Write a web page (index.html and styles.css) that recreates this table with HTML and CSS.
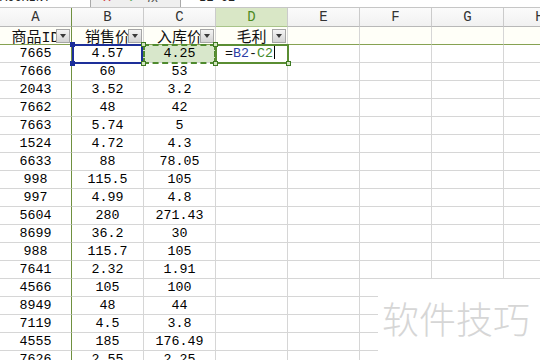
FILE: index.html
```html
<!DOCTYPE html>
<html>
<head>
<meta charset="utf-8">
<link rel="stylesheet" href="styles.css">
</head>
<body>
<div class="app">
  <div class="fbar">
    <div class="namebox"><span class="fbar-text">ACCRINT</span></div>
    <div class="fbtns">
      <span class="fb-icon fb-x">✕</span>
      <span class="fb-icon fb-ok">✓</span>
      <span class="fb-icon fb-fx">fx</span>
    </div>
    <div class="finput"><span class="fbar-text">=B2-C2</span></div>
  </div>
  <div class="sheet">
    <div class="ch ca">A</div><div class="ch">B</div><div class="ch">C</div><div class="ch sel">D</div><div class="ch">E</div><div class="ch">F</div><div class="ch">G</div><div class="ch">H</div>

    <div class="c fh ca"><span class="cjk">商品</span>ID<span class="dd"></span></div>
    <div class="c fh"><span class="cjk">销售价</span><span class="dd"></span></div>
    <div class="c fh"><span class="cjk">入库价</span><span class="dd"></span></div>
    <div class="c fh"><span class="cjk">毛利</span><span class="dd"></span></div>
    <div class="c fh"></div><div class="c fh"></div><div class="c fh"></div><div class="c fh"></div>

    <div class="c ca">7665</div>
    <div class="c b2">4.57<span class="box box-blue"></span><span class="h hb b2-tl"></span><span class="h hb b2-bl"></span></div>
    <div class="c c2">4.25<span class="box box-dash"></span><span class="h hg c2-tl"></span><span class="h hg c2-bl"></span><span class="h hg c2-tr"></span><span class="h hg c2-br"></span></div>
    <div class="c d2"><span class="op">=</span><span class="rb">B2</span><span class="op">-</span><span class="rc">C2</span><span class="caret"></span><span class="box box-green"></span><span class="h hg d2-br"></span></div>
    <div class="c"></div><div class="c"></div><div class="c"></div><div class="c"></div>

    <div class="c ca">7666</div><div class="c">60</div><div class="c">53</div><div class="c"></div><div class="c"></div><div class="c"></div><div class="c"></div><div class="c"></div>
    <div class="c ca">2043</div><div class="c">3.52</div><div class="c">3.2</div><div class="c"></div><div class="c"></div><div class="c"></div><div class="c"></div><div class="c"></div>
    <div class="c ca">7662</div><div class="c">48</div><div class="c">42</div><div class="c"></div><div class="c"></div><div class="c"></div><div class="c"></div><div class="c"></div>
    <div class="c ca">7663</div><div class="c">5.74</div><div class="c">5</div><div class="c"></div><div class="c"></div><div class="c"></div><div class="c"></div><div class="c"></div>
    <div class="c ca">1524</div><div class="c">4.72</div><div class="c">4.3</div><div class="c"></div><div class="c"></div><div class="c"></div><div class="c"></div><div class="c"></div>
    <div class="c ca">6633</div><div class="c">88</div><div class="c">78.05</div><div class="c"></div><div class="c"></div><div class="c"></div><div class="c"></div><div class="c"></div>
    <div class="c ca">998</div><div class="c">115.5</div><div class="c">105</div><div class="c"></div><div class="c"></div><div class="c"></div><div class="c"></div><div class="c"></div>
    <div class="c ca">997</div><div class="c">4.99</div><div class="c">4.8</div><div class="c"></div><div class="c"></div><div class="c"></div><div class="c"></div><div class="c"></div>
    <div class="c ca">5604</div><div class="c">280</div><div class="c">271.43</div><div class="c"></div><div class="c"></div><div class="c"></div><div class="c"></div><div class="c"></div>
    <div class="c ca">8699</div><div class="c">36.2</div><div class="c">30</div><div class="c"></div><div class="c"></div><div class="c"></div><div class="c"></div><div class="c"></div>
    <div class="c ca">988</div><div class="c">115.7</div><div class="c">105</div><div class="c"></div><div class="c"></div><div class="c"></div><div class="c"></div><div class="c"></div>
    <div class="c ca">7641</div><div class="c">2.32</div><div class="c">1.91</div><div class="c"></div><div class="c"></div><div class="c"></div><div class="c"></div><div class="c"></div>
    <div class="c ca">4566</div><div class="c">105</div><div class="c">100</div><div class="c"></div><div class="c"></div><div class="c"></div><div class="c"></div><div class="c"></div>
    <div class="c ca">8949</div><div class="c">48</div><div class="c">44</div><div class="c"></div><div class="c"></div><div class="c"></div><div class="c"></div><div class="c"></div>
    <div class="c ca">7119</div><div class="c">4.5</div><div class="c">3.8</div><div class="c"></div><div class="c"></div><div class="c"></div><div class="c"></div><div class="c"></div>
    <div class="c ca">4555</div><div class="c">185</div><div class="c">176.49</div><div class="c"></div><div class="c"></div><div class="c"></div><div class="c"></div><div class="c"></div>
    <div class="c ca">7626</div><div class="c">2.55</div><div class="c">2.25</div><div class="c"></div><div class="c"></div><div class="c"></div><div class="c"></div><div class="c"></div>
  </div>
  <div class="wm">软件技巧</div>
</div>
</body>
</html>
```
FILE: styles.css
```css
* { box-sizing: border-box; }
html, body { margin: 0; padding: 0; }
body {
  width: 540px;
  height: 360px;
  overflow: hidden;
  background: #fff;
  font-family: "Liberation Mono", "Noto Sans CJK SC", monospace;
}
.app {
  position: relative;
  width: 540px;
  height: 360px;
  overflow: hidden;
}

/* formula bar (only its bottom edge is visible) */
.fbar {
  display: flex;
  height: 8px;
  border-bottom: 1px solid #c6c6c6;
  background: #efefef;
  overflow: hidden;
}
.namebox {
  width: 91px;
  flex: none;
  background: #fff;
  border-right: 1px solid #a9a9a9;
  display: flex;
  align-items: flex-end;
  overflow: hidden;
}
.fbar-text {
  font-size: 12px;
  line-height: 12px;
  height: 12px;
  margin-bottom: 3px;
  color: #222;
  white-space: nowrap;
}
.fbtns {
  width: 89px;
  flex: none;
  display: flex;
  align-items: flex-end;
  padding-left: 6px;
  gap: 6px;
}
.fb-icon {
  width: 20px;
  text-align: center;
  font-family: "DejaVu Sans", sans-serif;
  font-size: 12px;
  line-height: 12px;
  height: 12px;
  margin-bottom: 3px;
}
.fb-x { color: #d23a3a; }
.fb-ok { color: #3a9a3a; }
.fb-fx { color: #555; font-style: italic; margin-left: -6px; }
.finput {
  flex: 1;
  background: #fff;
  border-left: 1px solid #a9a9a9;
  padding-left: 11px;
  display: flex;
  align-items: flex-end;
}

/* sheet grid */
.sheet {
  display: grid;
  grid-template-columns: repeat(8, 72px);
  grid-template-rows: 19px;
  grid-auto-rows: 18px;
  width: 576px;
}
.ch {
  border-right: 1px solid #cbcbcb;
  border-bottom: 1px solid #b8b8b8;
  background: linear-gradient(#fbfbfb, #f1f1f1);
  font-size: 14px;
  line-height: 18px;
  color: #333;
  text-align: center;
}
.ch.sel {
  background: #d9e7c6;
  color: #4d8a1f;
  border-bottom-color: #a9c48a;
}
.c {
  position: relative;
  border-right: 1px solid #d6d6d6;
  border-bottom: 1px solid #d6d6d6;
  font-size: 13.3px;
  line-height: 17px;
  text-align: center;
  color: #000;
  white-space: nowrap;
}
.ca { border-right-color: #6f903f; }
.fh {
  border-bottom-color: #86a252;
  background: #fffff8;
  font-size: 15px;
  line-height: 17px;
  color: #111;
}
.cjk { font-family: "Noto Sans CJK SC", sans-serif; font-size: 15px; }

.dd {
  position: absolute;
  right: 1px;
  top: 2px;
  width: 14px;
  height: 14px;
  border: 1px solid #a6a6a6;
  background: linear-gradient(#f4f4f4, #d4d4d4);
  z-index: 1;
}
.dd::after {
  content: "";
  position: absolute;
  left: 2.5px;
  top: 4px;
  border-left: 3.5px solid transparent;
  border-right: 3.5px solid transparent;
  border-top: 4px solid #3a3a3a;
}

/* selection states */
.c2 { background: #d8e7cb; }
.d2 { text-align: left; padding-left: 9px; }
.op { color: #111; }
.rb { color: #2b3ea6; }
.rc { color: #3f8a2a; }
.caret {
  display: inline-block;
  width: 1px;
  height: 13px;
  background: #000;
  vertical-align: -2px;
  margin-left: 1px;
}
.box {
  position: absolute;
  z-index: 1;
  pointer-events: none;
}
.box-blue {
  left: 0;
  top: -1px;
  width: 71px;
  height: 20px;
  border: 2px solid #1d2f99;
}
.box-dash {
  left: -1px;
  top: -1px;
  width: 73px;
  height: 20px;
  border: 2px dashed #4f8a2e;
}
.box-green {
  left: -1px;
  top: -1px;
  width: 74px;
  height: 20px;
  border: 2px solid #5a8d33;
}
.h {
  position: absolute;
  width: 5px;
  height: 5px;
  z-index: 2;
}
.hb { background: #1b2e9a; }
.hg { background: #d3e6c0; border: 1px solid #3d7a22; }
.b2-tl { left: -2px; top: -3px; }
.b2-bl { left: -2px; top: 16px; }
.c2-tl { left: -3px; top: -3px; }
.c2-bl { left: -3px; top: 16px; }
.c2-tr { left: 69px; top: -3px; }
.c2-br { left: 69px; top: 16px; }
.d2-br { left: 70px; top: 16px; }

/* watermark overlay */
.wm {
  position: absolute;
  left: 378px;
  top: 279px;
  right: 0;
  bottom: 0;
  z-index: 3;
  background: #fff;
  color: #d6d6d6;
  font-family: "Noto Sans CJK SC", sans-serif;
  font-weight: 300;
  font-size: 37px;
  line-height: 37px;
  padding: 21px 0 0 4px;
  white-space: nowrap;
}
```
